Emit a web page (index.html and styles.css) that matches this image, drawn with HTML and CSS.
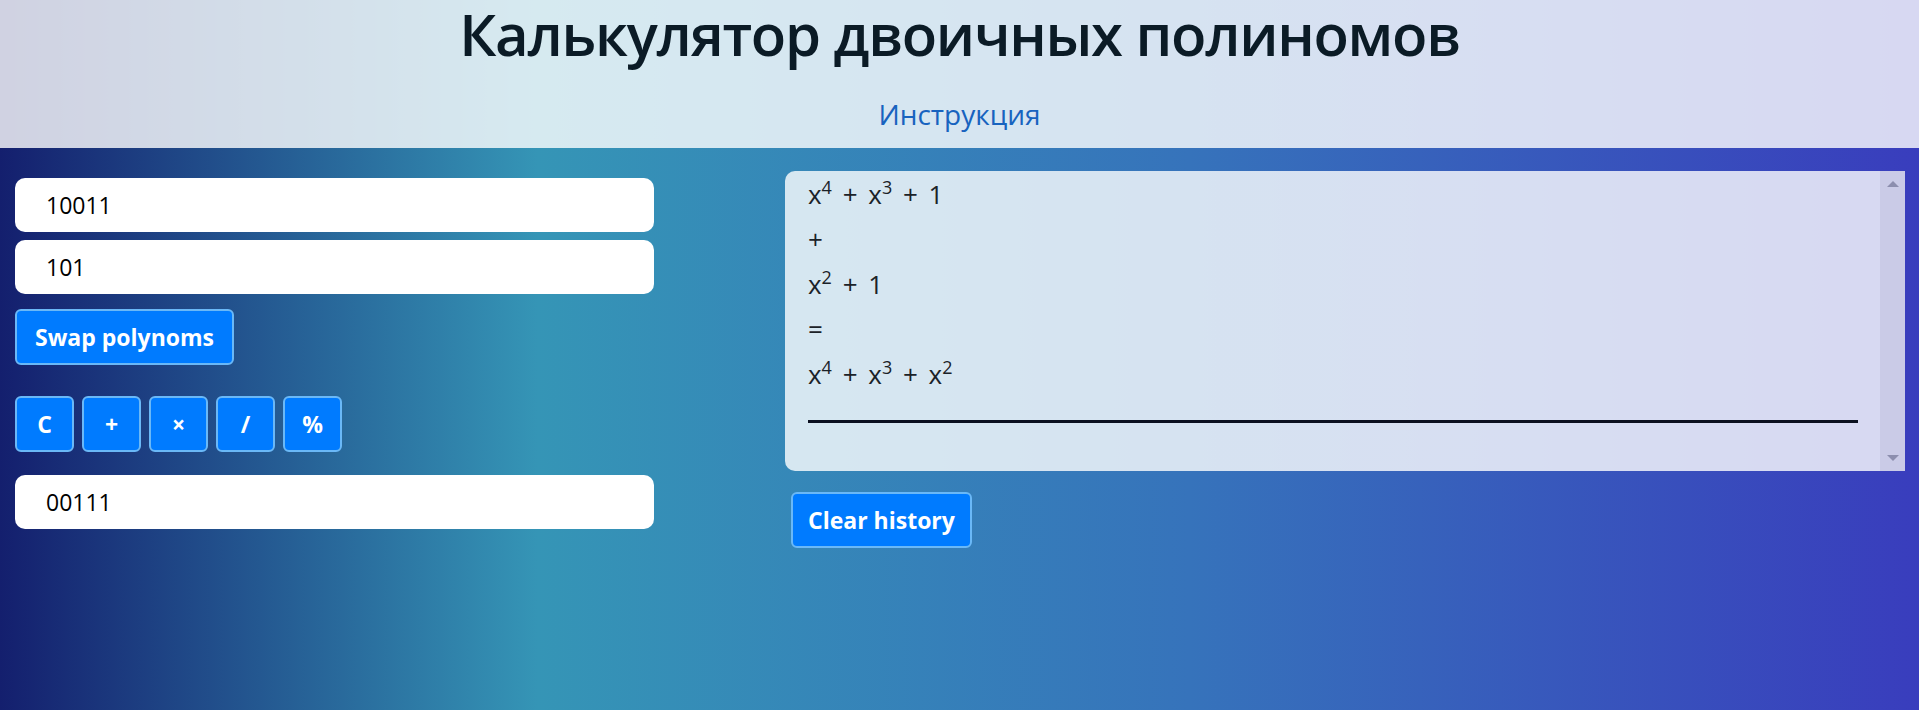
FILE: index.html
```html
<!DOCTYPE html>
<html lang="ru">
<head>
<meta charset="utf-8">
<title>Калькулятор двоичных полиномов</title>
<link rel="stylesheet" href="styles.css">
</head>
<body>
<header class="top">
  <h1 class="title">Калькулятор двоичных полиномов</h1>
  <a class="help-link" href="#">Инструкция</a>
</header>
<main class="calc">
  <section class="left">
    <input class="field first" type="text" value="10011">
    <input class="field second" type="text" value="101">
    <div class="swap-row"><button class="btn">Swap polynoms</button></div>
    <div class="ops">
      <button class="btn op">C</button>
      <button class="btn op">+</button>
      <button class="btn op">×</button>
      <button class="btn op">/</button>
      <button class="btn op">%</button>
    </div>
    <input class="field result" type="text" value="00111">
  </section>
  <section class="right">
    <div class="history">
      <div class="history-body">
        <div class="hline">x<sup>4</sup> + x<sup>3</sup> + 1</div>
        <div class="hline">+</div>
        <div class="hline">x<sup>2</sup> + 1</div>
        <div class="hline">=</div>
        <div class="hline">x<sup>4</sup> + x<sup>3</sup> + x<sup>2</sup></div>
        <div class="rule"></div>
      </div>
      <div class="scrollbar">
        <span class="arrow up"></span>
        <span class="arrow down"></span>
      </div>
    </div>
    <div class="clear-row"><button class="btn clear">Clear history</button></div>
  </section>
</main>
</body>
</html>
```
FILE: styles.css
```css
html, body {
  margin: 0;
  padding: 0;
}
body {
  min-height: 100vh;
  font-family: "Open Sans", "Noto Sans", sans-serif;
  background: linear-gradient(to right, #141f6e 0%, #3595b6 28%, #3673bb 62%, #393dbd 100%);
}
.top {
  background: rgba(255, 255, 255, 0.8);
  height: 148px;
  box-sizing: border-box;
  padding-top: 4px;
  text-align: center;
}
.title {
  margin: 0;
  font-size: 58px;
  letter-spacing: -1.3px;
  font-weight: 600;
  line-height: 60px;
  color: #0b1b26;
}
.help-link {
  display: inline-block;
  margin-top: 30px;
  font-size: 28px;
  line-height: 40px;
  color: #1863bf;
  text-decoration: none;
}
.calc {
  display: grid;
  grid-template-columns: 639px 1fr;
  column-gap: 131px;
  padding: 0 14px 0 15px;
}
.left {
  display: flex;
  flex-direction: column;
  padding-top: 30px;
}
.field {
  display: block;
  box-sizing: border-box;
  width: 100%;
  height: 54px;
  border: none;
  border-radius: 10px;
  background: #fff;
  padding: 0 0 0 31px;
  font-family: "Open Sans", sans-serif;
  font-size: 23px;
  color: #000;
  outline: none;
}
.second {
  margin-top: 8px;
}
.swap-row {
  margin-top: 15px;
  display: flex;
}
.btn {
  box-sizing: border-box;
  height: 56px;
  padding: 0 18px;
  border: 2px solid #6ab8f7;
  border-radius: 6px;
  background: #007bff;
  color: #fff;
  font-family: "Open Sans", sans-serif;
  font-weight: 700;
  font-size: 23px;
  cursor: pointer;
}
.btn.clear {
  padding: 0 15px;
}
.ops {
  display: flex;
  gap: 8px;
  margin-top: 31px;
}
.op {
  width: 59px;
  padding: 0;
}
.result {
  margin-top: 23px;
}
.right {
  padding-top: 23px;
}
.history {
  display: flex;
  height: 300px;
  border-radius: 10px 0 0 10px;
  background: rgba(255, 255, 255, 0.8);
  overflow: hidden;
}
.history-body {
  flex: 1;
  padding: 1px 22px 0 23px;
  font-size: 26px;
  word-spacing: 4px;
  line-height: 45px;
  color: #1b2228;
}
.hline sup {
  font-size: 18px;
  line-height: 0;
  vertical-align: 10px;
}
.rule {
  height: 3px;
  margin-top: 23px;
  background: #0b1020;
}
.scrollbar {
  width: 25px;
  background: #cacbe7;
  display: flex;
  flex-direction: column;
  justify-content: space-between;
  align-items: center;
  padding: 10px 0 10px;
}
.arrow {
  width: 0;
  height: 0;
  border-left: 6px solid transparent;
  border-right: 6px solid transparent;
}
.arrow.up {
  border-bottom: 6px solid #8c8eae;
}
.arrow.down {
  border-top: 6px solid #8c8eae;
}
.clear-row {
  display: flex;
  margin-top: 21px;
  padding-left: 6px;
}
```
